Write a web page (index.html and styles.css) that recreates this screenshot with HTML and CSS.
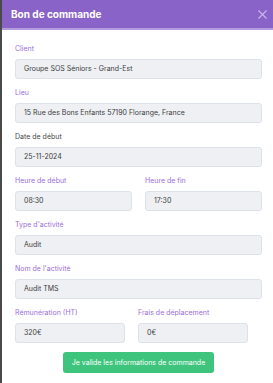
FILE: index.html
```html
<!DOCTYPE html>
<html lang="fr">
<head>
    <meta charset="UTF-8">
    <meta name="viewport" content="width=device-width, initial-scale=1.0">
    <title>Bon de commande</title>
    <link rel="stylesheet" href="styles.css">
</head>
<body>
    <div class="modal">
        <div class="modal-header">
            <h1>Bon de commande</h1>
            <svg class="close" width="9" height="9" viewBox="0 0 9 9">
                <path d="M0.5 0.5 L8.5 8.5 M8.5 0.5 L0.5 8.5" stroke="#c9b6ee" stroke-width="1.1" fill="none"/>
            </svg>
        </div>

        <div class="modal-body">
            <div class="field">
                <label class="accent">Client</label>
                <div class="input">Groupe SOS Séniors - Grand-Est</div>
            </div>

            <div class="field">
                <label class="accent">Lieu</label>
                <div class="input">15 Rue des Bons Enfants 57190 Florange, France</div>
            </div>

            <div class="field">
                <label>Date de début</label>
                <div class="input">25-11-2024</div>
            </div>

            <div class="row">
                <div class="field">
                    <label class="accent">Heure de début</label>
                    <div class="input">08:30</div>
                </div>
                <div class="field">
                    <label class="accent">Heure de fin</label>
                    <div class="input">17:30</div>
                </div>
            </div>

            <div class="field">
                <label class="accent">Type d'activité</label>
                <div class="input">Audit</div>
            </div>

            <div class="field">
                <label class="accent">Nom de l'activité</label>
                <div class="input">Audit TMS</div>
            </div>

            <div class="row row-small">
                <div class="field">
                    <label class="accent">Rémunération (HT)</label>
                    <div class="input">320€</div>
                </div>
                <div class="field">
                    <label class="accent">Frais de déplacement</label>
                    <div class="input">0€</div>
                </div>
            </div>

            <div class="actions">
                <button>Je valide les informations de commande</button>
            </div>
        </div>
    </div>
</body>
</html>
```

FILE: styles.css
```css
html, body {
    margin: 0;
    padding: 0;
}
body {
    background-color: #4a4a4a;
    font-family: Inter, "Noto Sans", sans-serif;
    height: 383px;
    overflow: hidden;
}
.modal {
    margin-left: 2px;
    background-color: #fff;
    height: 383px;
}
.modal-header {
    display: flex;
    align-items: center;
    justify-content: space-between;
    height: 28px;
    padding: 0 6px 0 9px;
    background-color: #8a63c8;
    border-bottom: 2px solid #b69ce0;
}
.modal-header h1 {
    margin: 0;
    font-size: 10px;
    font-weight: 700;
    color: #fff;
}
.close {
    display: block;
}
.modal-body {
    padding: 13px 11px 0 13px;
}
.field {
    margin-bottom: 8px;
}
label {
    display: block;
    height: 11px;
    line-height: 11px;
    margin-bottom: 5px;
    font-size: 7px;
    color: #444;
}
label.accent {
    color: #9b6edb;
}
.input {
    box-sizing: border-box;
    height: 20px;
    line-height: 18px;
    padding: 0 8px;
    font-size: 7px;
    color: #3c3c3c;
    background-color: #eef0f4;
    border: 1px solid #dde1e8;
    border-radius: 3px;
    white-space: nowrap;
}
.row {
    display: grid;
    grid-template-columns: 117px 117px;
    column-gap: 13px;
}
.row-small {
    grid-template-columns: 110px 110px;
}
.actions {
    display: flex;
    justify-content: center;
    padding-top: 1px;
}
button {
    height: 21px;
    width: 151px;
    padding: 0;
    font-family: Inter, "Noto Sans", sans-serif;
    font-size: 7px;
    color: #fff;
    background-color: #3ec47c;
    border: none;
    border-radius: 3px;
}
```
